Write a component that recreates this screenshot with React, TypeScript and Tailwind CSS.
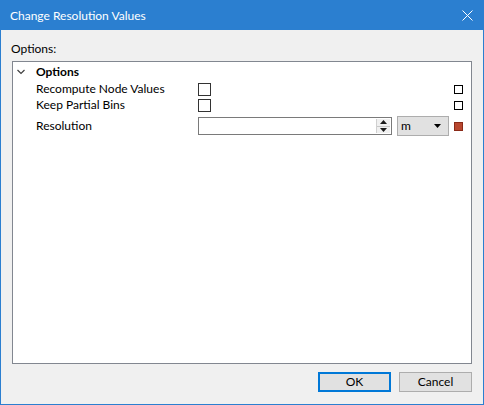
const font = { fontFamily: 'Lato, "Noto Sans", sans-serif' };

function SmallSquare({ red = false }: { red?: boolean }) {
  return (
    <div
      className={
        red
          ? "w-[9px] h-[9px] border border-[#8a2a18] bg-[#b8472f] shrink-0"
          : "w-[9px] h-[9px] border border-black bg-white shrink-0"
      }
    />
  );
}

function CheckBox() {
  return <div className="w-[13px] h-[13px] border border-[#333333] bg-white" />;
}

function Row({ label, children, red }: { label: string; children: React.ReactNode; red?: boolean }) {
  return (
    <div className="flex items-center h-[16px] pl-[23px] pr-[8px]">
      <div className="w-[162px] text-[12px] text-black leading-none">{label}</div>
      <div className="flex-1 flex items-center">{children}</div>
      <SmallSquare red={red} />
    </div>
  );
}

export default function App() {
  return (
    <div
      className="w-[484px] h-[405px] border border-[#2b7fd0] bg-[#f0f0f0] flex flex-col"
      style={font}
    >
      <div className="h-[29px] bg-[#2b7fd0] flex items-center justify-between pl-[9px] pr-[10px] shrink-0">
        <span className="text-white text-[12px]">Change Resolution Values</span>
        <svg width="11" height="11" viewBox="0 0 11 11">
          <path d="M0.5 0.5 L10.5 10.5 M10.5 0.5 L0.5 10.5" stroke="white" strokeWidth="1" />
        </svg>
      </div>

      <div className="flex-1 flex flex-col px-[11px]">
        <div className="mt-[11px] mb-[4px] h-[16px] leading-[16px] text-[12px] text-black -ml-[1px]">
          Options:
        </div>

        <div className="flex-1 border border-[#828790] bg-white">
          <div className="flex items-center h-[18px] mt-[1px]">
            <svg className="ml-[4px]" width="8" height="6" viewBox="0 0 8 6">
              <path d="M0.5 1 L4 4.5 L7.5 1" stroke="#404040" strokeWidth="1.2" fill="none" />
            </svg>
            <span className="ml-[11px] text-[12px] font-bold text-black leading-none">Options</span>
          </div>
          <Row label="Recompute Node Values">
            <CheckBox />
          </Row>
          <Row label="Keep Partial Bins">
            <CheckBox />
          </Row>
          <div className="flex items-center h-[22px] mt-[2px] pl-[23px] pr-[8px]">
            <div className="w-[162px] text-[12px] text-black leading-none">Resolution</div>
            <div className="flex-1 flex items-center">
              <div className="w-[194px] h-[18px] border border-[#7a7a7a] bg-white flex justify-end items-stretch p-[1px]">
                <div className="w-[14px] flex flex-col border-l border-[#d0d0d0] bg-[#f0f0f0]">
                  <div className="flex-1 flex items-center justify-center border-b border-[#c8c8c8]">
                    <svg width="7" height="4" viewBox="0 0 7 4">
                      <path d="M0 4 L3.5 0 L7 4 Z" fill="#1a1a1a" />
                    </svg>
                  </div>
                  <div className="flex-1 flex items-center justify-center">
                    <svg width="7" height="4" viewBox="0 0 7 4">
                      <path d="M0 0 L3.5 4 L7 0 Z" fill="#1a1a1a" />
                    </svg>
                  </div>
                </div>
              </div>
              <div className="ml-[5px] w-[52px] h-[20px] border border-[#adadad] bg-[#e1e1e1] flex items-center justify-between pl-[3px] pr-[7px]">
                <span className="text-[12px] text-black leading-none">m</span>
                <svg width="7" height="4" viewBox="0 0 7 4">
                  <path d="M0 0 L3.5 4 L7 0 Z" fill="#000" />
                </svg>
              </div>
            </div>
            <SmallSquare red />
          </div>
        </div>

        <div className="flex justify-end gap-[8px] mt-[8px] mb-[12px]">
          <button className="w-[73px] h-[20px] border-2 border-[#0078d7] bg-[#e1e1e1] text-[12px] text-black leading-none">
            OK
          </button>
          <button className="w-[73px] h-[20px] border border-[#adadad] bg-[#e1e1e1] text-[12px] text-black leading-none">
            Cancel
          </button>
        </div>
      </div>
    </div>
  );
}
